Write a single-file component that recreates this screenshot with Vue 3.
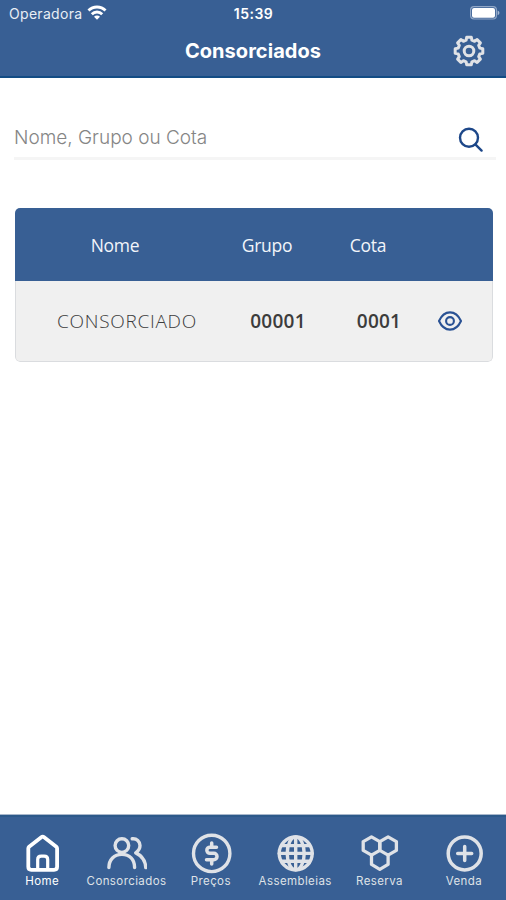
<template>
  <div class="screen">
    <header class="header">
      <div class="status-bar">
        <div class="carrier">
          <span class="carrier-name">Operadora</span>
          <svg class="wifi" width="20" height="16" viewBox="0 0 20 16" fill="none" stroke="#fff" stroke-width="2.9">
            <path d="M1.5 5.6a12 12 0 0 1 17 0" />
            <path d="M4.8 9.2a7.4 7.4 0 0 1 10.4 0" />
            <path d="M10 14.8l-3-3a4.2 4.2 0 0 1 6 0z" fill="#fff" stroke="none" />
          </svg>
        </div>
        <span class="clock">15:39</span>
        <svg class="battery" width="30" height="14" viewBox="0 0 30 14">
          <rect x="0.6" y="0.6" width="25.8" height="12.4" rx="3.4" fill="none" stroke="#91a7c7" stroke-width="1.2" />
          <rect x="2" y="2" width="23" height="9.8" rx="2" fill="#fff" />
          <path d="M27.6 4.6c2.4.8 2.4 3.8 0 4.6z" fill="#a6b8d2" />
        </svg>
      </div>
      <div class="title-bar">
        <h1>Consorciados</h1>
        <button class="settings" type="button" aria-label="Configurações">
          <svg width="34" height="34" viewBox="-17 -17 34 34" fill="none" stroke="#e0e2e6" stroke-width="3" stroke-linejoin="round">
            <path :d="gearPath" />
            <circle r="4.800" />
          </svg>
        </button>
      </div>
    </header>

    <main class="content">
      <form class="search" @submit.prevent>
        <input v-model="search" type="text" placeholder="Nome, Grupo ou Cota" />
        <button type="submit" aria-label="Buscar">
          <svg width="26" height="26" viewBox="0 0 26 26" fill="none" stroke="#1d4789" stroke-width="2.4" stroke-linecap="round">
            <circle cx="11" cy="10.8" r="9" />
            <path d="M17.6 17.6l6 6" />
          </svg>
        </button>
      </form>

      <div class="table">
        <div class="table-head">
          <span>Nome</span>
          <span>Grupo</span>
          <span>Cota</span>
        </div>
        <div v-for="item in filtered" :key="item.grupo + item.cota" class="table-row">
          <span class="nome">{{ item.nome }}</span>
          <span class="numero">{{ item.grupo }}</span>
          <span class="numero">{{ item.cota }}</span>
          <svg width="26" height="20" viewBox="0 0 26 20" fill="none" stroke="#2a5294" stroke-width="2.1">
            <path d="M2 10C4.400 4.800 8 1.400 13 1.400S21.600 4.800 24 10C21.600 15.200 18 18.600 13 18.600S4.400 15.200 2 10z" />
            <circle cx="13" cy="10" r="3.900" />
          </svg>
        </div>
      </div>
    </main>

    <nav class="tabs">
      <a
        v-for="tab in tabs"
        :key="tab.id"
        class="tab"
        :class="{ active: tab.id === activeTab }"
        @click="activeTab = tab.id"
      >
        <svg width="42" height="42" viewBox="-0.700 -0.600 42 42" fill="none" stroke="currentColor" stroke-linecap="round" stroke-linejoin="round">
          <g v-if="tab.id === 'home'" stroke-width="3.8">
            <path d="M6.600 15.800q0-1 .8-1.700L19.600 4.600q1.400-1.100 2.800 0L34.600 14.100q.8.700.8 1.700V34.200q0 3-3 3H9.600q-3 0-3-3z" />
            <path d="M16 36.500V27q0-3.500 3.500-3.500h3q3.500 0 3.500 3.500v9.500" stroke-width="3.200" />
          </g>
          <g v-else-if="tab.id === 'consorciados'" stroke-width="3.400">
            <circle cx="16.200" cy="13" r="6.800" />
            <path d="M3.200 35C3.200 26.800 8.500 21.800 16.200 21.800S28.900 26.800 28.900 35" />
            <path d="M26.500 6.200C31 5.700 34.300 8.800 34.300 13c0 3.300-1.600 5.400-4.200 7.300 5.800 2.800 9.600 8 10 14.700" />
          </g>
          <g v-else-if="tab.id === 'precos'">
            <circle cx="21" cy="20.800" r="18.200" stroke-width="3.400" />
            <path d="M25.800 14.600H19.200a3 3 0 0 0 0 6.100h3.900a3.200 3.200 0 0 1 0 6.400h-7.300M21 10.500v4M21 27.400v4" stroke-width="3.500" />
          </g>
          <g v-else-if="tab.id === 'assembleias'" stroke-width="3.400">
            <circle cx="21" cy="20.800" r="16.500" />
            <ellipse cx="21" cy="20.800" rx="8.500" ry="16.500" />
            <path d="M21 4.500v32.600M4.500 20.800h33M7.200 13h27.600M7.200 28.600h27.600" />
          </g>
          <g v-else-if="tab.id === 'reserva'" stroke-width="3.300">
            <path d="M12.800 4.300l8.300 4.700v8.800l-8.300 4.700-8.300-4.700V9z" />
            <path d="M29.400 4.300l8.300 4.700v8.800l-8.300 4.700-8.300-4.700V9z" />
            <path d="M12.800 22.500v9.300l8.300 5 8.300-5v-9.300" />
          </g>
          <g v-else stroke-width="3.500">
            <circle cx="21" cy="20.800" r="16.500" />
            <path d="M21 13.800v14M14 20.800h14" />
          </g>
        </svg>
        <span>{{ tab.label }}</span>
      </a>
    </nav>
  </div>
</template>

<script setup>
import { ref, computed } from 'vue'

const search = ref('')
const activeTab = ref('home')

const consorciados = [
  { nome: 'CONSORCIADO', grupo: '00001', cota: '0001' }
]

const tabs = [
  { id: 'home', label: 'Home' },
  { id: 'consorciados', label: 'Consorciados' },
  { id: 'precos', label: 'Preços' },
  { id: 'assembleias', label: 'Assembleias' },
  { id: 'reserva', label: 'Reserva' },
  { id: 'venda', label: 'Venda' }
]

const filtered = computed(() => {
  const term = search.value.trim().toLowerCase()
  return consorciados.filter(c => `${c.nome} ${c.grupo} ${c.cota}`.toLowerCase().includes(term))
})

// eight teeth, four points each
const gearPath = (() => {
  const shape = [[-15, 11.2], [-9.5, 14], [9.5, 14], [15, 11.2]]
  const points = []
  for (let i = 0; i < 8; i++) {
    shape.forEach(([offset, r]) => {
      const a = ((i * 45 + offset) * Math.PI) / 180
      points.push(`${(r * Math.sin(a)).toFixed(2)} ${(-r * Math.cos(a)).toFixed(2)}`)
    })
  }
  return `M${points.join('L')}Z`
})()
</script>

<style>
body {
  margin: 0;
  background: #fff;
}
</style>

<style scoped>
.screen {
  display: flex;
  flex-direction: column;
  height: 900px;
  background: #fff;
  font-family: Inter, "Liberation Sans", sans-serif;
}

.header {
  box-sizing: border-box;
  height: 78px;
  background: #385f94;
  border-bottom: 2px solid #134c84;
  color: #fff;
}

.status-bar {
  display: grid;
  grid-template-columns: 1fr auto 1fr;
  align-items: center;
  height: 26px;
  padding: 0 6px 0 9px;
}

.carrier {
  display: flex;
  align-items: center;
  gap: 5px;
}

.carrier-name {
  color: #e9eef5;
  font-size: 14px;
  letter-spacing: 0.3px;
}

.clock {
  margin-right: 2px;
  font-size: 14px;
  font-weight: 600;
  letter-spacing: 0.5px;
}

.battery {
  justify-self: end;
}

.title-bar {
  display: grid;
  grid-template-columns: 1fr auto 1fr;
  align-items: center;
  height: 50px;
  padding: 0 20px;
}

h1 {
  grid-column: 2;
  margin: 0;
  font-size: 20px;
  font-weight: 700;
  letter-spacing: 0.05px;
}

button {
  display: flex;
  padding: 0;
  border: 0;
  background: none;
  cursor: pointer;
}

.settings {
  justify-self: end;
}

.content {
  flex: 1;
  padding: 39px 10px 0 14px;
}

.search {
  display: flex;
  align-items: center;
  height: 40px;
  padding-right: 12px;
  border-bottom: 3px solid #f5f5f5;
}

.search input {
  flex: 1;
  padding: 0;
  border: 0;
  outline: none;
  background: none;
  color: #444;
  font-family: inherit;
  font-size: 19px;
  font-weight: 300;
}

.search input::placeholder {
  color: #858585;
  opacity: 1;
}

.search button {
  margin-top: 6px;
}

.table {
  box-sizing: border-box;
  width: 478px;
  margin: 48px 0 0 1px;
  border-radius: 5px;
  overflow: hidden;
  font-family: "Open Sans", "Noto Sans", sans-serif;
}

.table-head,
.table-row {
  display: grid;
  grid-template-columns: 200px 104px 98px 1fr;
  align-items: center;
  justify-items: center;
}

.table-head {
  height: 73px;
  background: #385f94;
  color: #f2f5fa;
  font-size: 17.5px;
  letter-spacing: -0.25px;
}

.table-row {
  box-sizing: border-box;
  height: 81px;
  padding: 0 20px 0 10px;
  border: 1px solid #dadcdf;
  border-top: 0;
  border-radius: 0 0 5px 5px;
  background: #f0f0f0;
  color: #3c3c3c;
  font-size: 19px;
}

.nome {
  margin-left: 2px;
  font-weight: 300;
  letter-spacing: 0.7px;
}

.numero {
  font-weight: 600;
  letter-spacing: 0.25px;
}

.tabs {
  box-sizing: border-box;
  display: grid;
  grid-template-columns: repeat(6, 1fr);
  height: 86px;
  border-top: 1px solid #a9b8cc;
  background: #385f94;
  box-shadow: inset 0 2px #2d598a;
}

.tab {
  display: flex;
  flex-direction: column;
  align-items: center;
  padding-top: 17px;
  color: #dfe2e7;
  cursor: pointer;
}

.tab span {
  font-size: 11.5px;
  line-height: 14px;
  letter-spacing: 0.4px;
}

.tab.active {
  color: #fff;
}
</style>
